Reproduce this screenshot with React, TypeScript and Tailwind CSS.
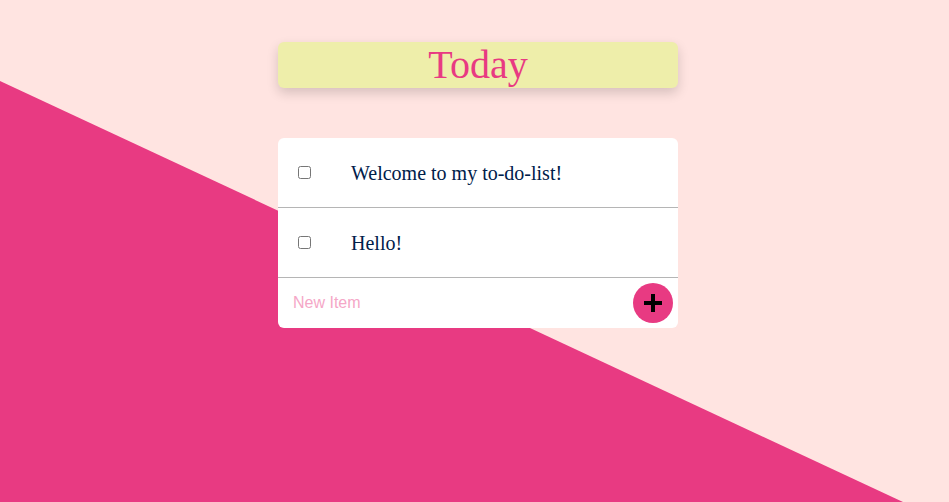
import React from "react";

export default function App() {
  return (
    <div className="relative h-[502px] w-full overflow-hidden bg-[#FFE4E1]" style={{ fontFamily: '"Liberation Serif", "Times New Roman", serif' }}>
      <div className="absolute inset-0 bg-[#E83A82] [clip-path:polygon(0_81px,903px_100%,0_100%)]" />
      <div className="relative ml-[278px] flex w-[400px] flex-col pt-[42px]">
        <div className="flex h-[46px] items-center justify-center rounded-md bg-[#EEEEAA] shadow-[0_5px_12px_rgba(0,0,0,0.16)]">
          <h1 className="text-[40px] leading-none text-[#E83A82]">Today</h1>
        </div>
        <div className="mt-[50px] rounded-md bg-white">
          {["Welcome to my to-do-list!", "Hello!"].map((t) => (
            <div key={t} className="flex min-h-[70px] items-center border-b border-[#B5B5B5]">
              <input type="checkbox" className="m-5 h-[13px] w-[13px]" />
              <p className="px-5 text-[20px] text-[#00204a]">{t}</p>
            </div>
          ))}
          <div className="flex h-[50px] items-center">
            <input
              type="text"
              placeholder="New Item"
              className="ml-[15px] h-full flex-1 bg-transparent text-[16px] text-[#00204a] outline-none placeholder:text-[#F5A7C7]"
              style={{ fontFamily: '"Liberation Sans", Arial, sans-serif' }}
            />
            <button className="mr-[5px] flex h-[40px] w-[40px] items-center justify-center rounded-full bg-[#E83A82]">
              <svg width="18" height="18" viewBox="0 0 18 18">
                <rect x="7" y="0" width="4" height="18" fill="#000" />
                <rect x="0" y="7" width="18" height="4" fill="#000" />
              </svg>
            </button>
          </div>
        </div>
      </div>
    </div>
  );
}
